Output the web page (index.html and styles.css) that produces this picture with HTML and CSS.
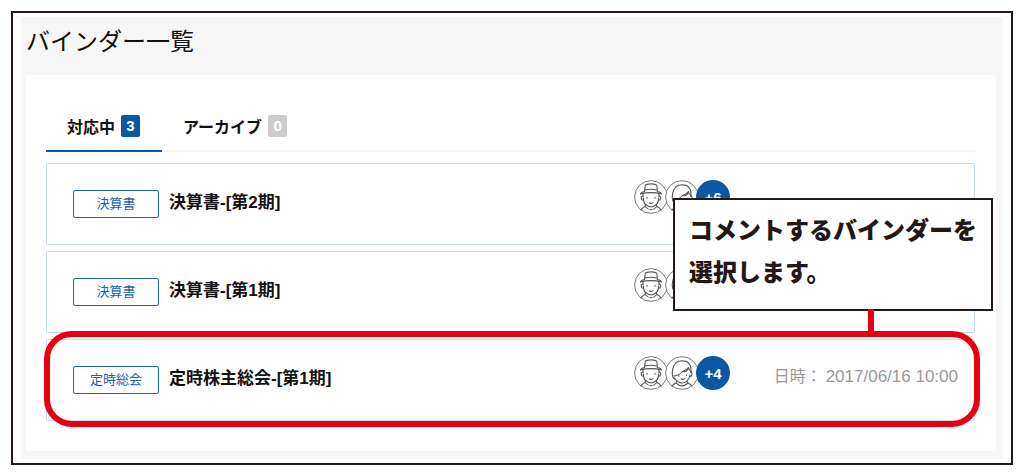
FILE: index.html
```html
<!DOCTYPE html>
<html lang="ja">
<head>
<meta charset="utf-8">
<meta name="viewport" content="width=device-width, initial-scale=1">
<title>バインダー一覧</title>
<link rel="stylesheet" href="styles.css">
</head>
<body>
<svg class="sprite" aria-hidden="true">
  <defs>
    <symbol id="face-hat" viewBox="0 0 34 34">
      <circle cx="17" cy="17" r="16.4" fill="#fff" stroke="#777" stroke-width="1"/>
      <g fill="none" stroke="#555" stroke-width="1.1" stroke-linecap="round" stroke-linejoin="round">
        <path d="M10.500 11.800 L11.300 5 Q17 2.800 22.700 5 L23.500 11.800"/>
        <path d="M11 10 Q17 8.600 23 10"/>
        <path d="M10.500 11.500 Q6.800 12.300 6.500 14 Q17 11.300 27.500 14 Q27.200 12.300 23.500 11.500"/>
        <path d="M9 14 V17 M25 14 V17 M9 16.300 Q7 15.800 7.200 18 Q7.500 20.300 9.500 20 M25 16.300 Q27 15.800 26.800 18 Q26.500 20.300 24.500 20"/>
        <path d="M9.200 18 Q9.500 26 17 27 Q24.500 26 24.800 18"/>
        <path d="M15.200 22.800 Q17 24 18.800 22.800 M13 17.300 V18.300 M21 17.300 V18.300"/>
        <path d="M12 24.500 L11 26.500 Q17 33 23 26.500 L22 24.500 M11 26.500 Q8.500 27.500 7 30 M23 26.500 Q25.500 27.500 27 30"/>
      </g>
    </symbol>
    <symbol id="face-hair" viewBox="0 0 34 34">
      <circle cx="17" cy="17" r="16.4" fill="#fff" stroke="#777" stroke-width="1"/>
      <g fill="none" stroke="#555" stroke-width="1.1" stroke-linecap="round" stroke-linejoin="round">
        <path d="M9.500 23 Q6.500 20 7.500 14 Q9 4.800 17.500 4.800 Q26.500 5 26 16"/>
        <path d="M9 20 Q14 19.500 17.500 15.500 Q22 14 23.500 11.500 M17.500 15.500 Q22.500 16.500 23.500 11.500 Q24 14.500 26 15.500"/>
        <path d="M25.500 16 Q27.500 16.300 26.800 19 Q26.300 20.800 24.700 20.500"/>
        <path d="M9.500 22 Q12 26.800 17.500 27 Q23.500 26.500 25 19"/>
        <path d="M16 22.800 Q17.500 24 19.500 22.800 M14 19.500 V20.200 M21.500 18.800 V19.500"/>
        <path d="M12 25 L11 27 Q17 32.800 23 27 L22 25 M11 27 Q8.500 28 7 30 M23 27 Q25.500 28 27 30"/>
      </g>
    </symbol>
  </defs>
</svg>
<div class="frame">
  <main class="page">
    <h1 class="page-title">バインダー一覧</h1>
    <section class="panel">
      <div class="tabs" role="tablist">
        <button class="tab tab-active" type="button" role="tab" aria-selected="true">対応中<span class="count">3</span></button>
        <button class="tab" type="button" role="tab" aria-selected="false">アーカイブ<span class="count count-empty">0</span></button>
      </div>
      <div class="board">
        <ul class="binders">
          <li class="binder">
            <span class="tag">決算書</span>
            <a class="binder-name" href="#">決算書-[第2期]</a>
            <div class="members">
              <svg class="avatar"><use href="#face-hat"/></svg>
              <svg class="avatar"><use href="#face-hair"/></svg>
              <span class="avatar more">+6</span>
            </div>
            <div class="date"></div>
          </li>
          <li class="binder">
            <span class="tag">決算書</span>
            <a class="binder-name" href="#">決算書-[第1期]</a>
            <div class="members">
              <svg class="avatar"><use href="#face-hat"/></svg>
              <svg class="avatar"><use href="#face-hair"/></svg>
            </div>
            <div class="date"></div>
          </li>
          <li class="binder binder-marked">
            <span class="tag">定時総会</span>
            <a class="binder-name" href="#">定時株主総会-[第1期]</a>
            <div class="members">
              <svg class="avatar"><use href="#face-hat"/></svg>
              <svg class="avatar"><use href="#face-hair"/></svg>
              <span class="avatar more">+4</span>
            </div>
            <div class="date"><span>日時：</span><time datetime="2017-06-16T10:00">2017/06/16 10:00</time></div>
          </li>
        </ul>
        <p class="callout">コメントするバインダーを<br>選択します。</p>
      </div>
    </section>
  </main>
</div>
</body>
</html>
```

FILE: styles.css
```css
* {
  box-sizing: border-box;
}

body {
  margin: 0;
  padding: 11px;
  background: #fff;
  color: #111;
  font-family: "Liberation Sans", "Noto Sans CJK JP", sans-serif;
  font-size: 16px;
}

.sprite {
  position: absolute;
  width: 0;
  height: 0;
}

.frame {
  border: 2px solid #231815;
  padding: 4px 8px;
}

.page {
  background: #f6f6f6;
  padding: 7px 7px 8px 5px;
}

.page-title {
  margin: 0 0 15px;
  font-size: 24px;
  font-weight: 400;
  line-height: 36px;
}

.panel {
  background: #fefefe;
  padding: 27px 21px 30px 20px;
}

.tabs {
  display: flex;
  border-bottom: 2px solid #f5f5f5;
}

.tab {
  display: flex;
  align-items: center;
  gap: 6px;
  height: 50px;
  margin-bottom: -2px;
  padding: 2px 22px 2px 21px;
  border: 0;
  border-bottom: 2px solid transparent;
  background: none;
  color: #111;
  font: inherit;
  font-weight: 700;
}

.tab-active {
  border-bottom-color: #0b57a4;
}

.count {
  min-width: 19px;
  border-radius: 2px;
  background: #0b57a4;
  color: #fff;
  font-size: 15px;
  line-height: 22px;
  text-align: center;
}

.count-empty {
  background: #ccc;
}

.board {
  position: relative;
  margin-top: 11px;
}

.binders {
  display: grid;
  gap: 6px;
  margin: 0;
  padding: 0;
  list-style: none;
}

.binder {
  position: relative;
  display: flex;
  align-items: flex-start;
  min-height: 82px;
  padding: 16px 16px 16px 26px;
  border: 1px solid #c6dcee;
  border-radius: 2px;
}

.tag {
  width: 86px;
  margin-top: 10px;
  border: 1px solid #1d61a9;
  border-radius: 2px;
  color: #1d61a9;
  font-size: 13px;
  line-height: 26px;
  text-align: center;
}

.binder-name {
  flex: 1;
  margin-left: 10px;
  color: #111;
  font-size: 17px;
  font-weight: 700;
  line-height: 45px;
  text-decoration: none;
}

.members {
  display: flex;
  width: 96px;
}

.avatar {
  flex: none;
  width: 34px;
  height: 34px;
}

.avatar + .avatar {
  margin-left: -3px;
}

.more {
  z-index: 1;
  border-radius: 50%;
  background: #0b57a4;
  color: #fff;
  font-size: 15px;
  font-weight: 700;
  line-height: 36px;
  text-align: center;
}

.date {
  display: flex;
  justify-content: flex-end;
  gap: 4px;
  width: 228px;
  color: #999;
  line-height: 42px;
}

.date time {
  font-size: 17px;
}

.binder-marked::after {
  content: "";
  position: absolute;
  inset: -9px -6px -7px -3px;
  border: 6px solid #e60012;
  border-radius: 28px;
  pointer-events: none;
}

.callout {
  position: absolute;
  z-index: 2;
  top: 35px;
  right: -18px;
  margin: 0;
  padding: 8px 14px 17px;
  border: 2px solid #231815;
  background: #fefefe;
  color: #231815;
  font-family: "Noto Sans CJK JP", sans-serif;
  font-size: 24px;
  font-weight: 900;
  line-height: 42px;
}

.callout::after {
  content: "";
  position: absolute;
  top: 100%;
  right: 117px;
  width: 6px;
  height: 24px;
  background: #e60012;
}
```
